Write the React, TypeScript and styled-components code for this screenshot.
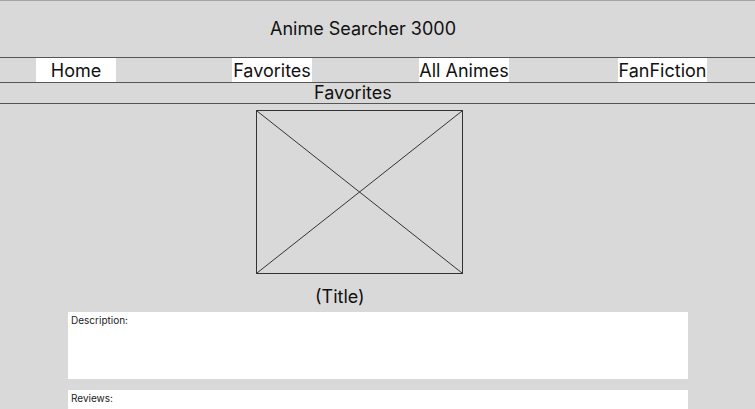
import React from "react";
import styled, { createGlobalStyle } from "styled-components";

const GlobalStyle = createGlobalStyle`
  html, body {
    margin: 0;
    padding: 0;
    background: #d9d9d9;
  }
  body {
    font-family: Inter, "Noto Sans", "Liberation Sans", sans-serif;
    color: #111;
  }
`;

const Page = styled.div`
  display: flex;
  flex-direction: column;
  height: 409px;
  background: #d9d9d9;
  border-top: 1px solid #a3a3a3;
  box-sizing: border-box;
  overflow: hidden;
  & > * {
    flex-shrink: 0;
  }
`;

const Header = styled.header`
  height: 56px;
  display: flex;
  align-items: center;
  padding-left: 270px;
`;

const SiteTitle = styled.h1`
  margin: 0;
  font-size: 18px;
  font-weight: 400;
  line-height: 22px;
`;

const Nav = styled.nav`
  display: flex;
  height: 24px;
  padding-left: 36px;
  border-top: 1px solid #555;
  border-bottom: 1px solid #555;
`;

const NavButton = styled.a<{ $width: number; $offset: number }>`
  display: flex;
  align-items: center;
  justify-content: center;
  width: ${(p) => p.$width}px;
  margin-left: ${(p) => p.$offset}px;
  height: 24px;
  padding-top: 1px;
  box-sizing: border-box;
  background: #ffffff;
  font-size: 18px;
  line-height: 22px;
  color: #111;
  text-decoration: none;
  white-space: nowrap;
`;

const SectionHeading = styled.h2`
  margin: 0;
  height: 20px;
  padding-left: 314px;
  font-size: 18px;
  font-weight: 400;
  line-height: 20px;
  border-bottom: 1px solid #555;
`;

const Main = styled.main`
  display: flex;
  flex-direction: column;
  align-items: flex-start;
  & > * {
    flex-shrink: 0;
  }
`;

const ImageFrame = styled.div`
  margin-top: 6px;
  margin-left: 256px;
  width: 207px;
  height: 164px;
  box-sizing: border-box;
  border: 1px solid #333;
  svg {
    display: block;
    width: 100%;
    height: 100%;
  }
`;

const ItemTitle = styled.h3`
  margin: 12px 0 0 315px;
  font-size: 18px;
  font-weight: 400;
  line-height: 22px;
`;

const InfoBox = styled.section<{ $top: number }>`
  margin-top: ${(p) => p.$top}px;
  margin-left: 68px;
  width: 620px;
  height: 67px;
  box-sizing: border-box;
  padding: 2px 3px;
  background: #ffffff;
  font-size: 10px;
  line-height: 12px;
  color: #222;
`;

const navItems = [
  { label: "Home", width: 80, offset: 0 },
  { label: "Favorites", width: 80, offset: 116 },
  { label: "All Animes", width: 90, offset: 107 },
  { label: "FanFiction", width: 89, offset: 109 },
];

export default function App() {
  return (
    <>
      <GlobalStyle />
      <Page>
        <Header>
          <SiteTitle>Anime Searcher 3000</SiteTitle>
        </Header>
        <Nav>
          {navItems.map((n) => (
            <NavButton key={n.label} $width={n.width} $offset={n.offset}>
              {n.label}
            </NavButton>
          ))}
        </Nav>
        <SectionHeading>Favorites</SectionHeading>
        <Main>
          <ImageFrame>
            <svg viewBox="0 0 100 100" preserveAspectRatio="none">
              <line x1="0" y1="0" x2="100" y2="100" stroke="#333" strokeWidth="1" vectorEffect="non-scaling-stroke" />
              <line x1="100" y1="0" x2="0" y2="100" stroke="#333" strokeWidth="1" vectorEffect="non-scaling-stroke" />
            </svg>
          </ImageFrame>
          <ItemTitle>(Title)</ItemTitle>
          <InfoBox $top={4}>Description:</InfoBox>
          <InfoBox $top={11}>Reviews:</InfoBox>
        </Main>
      </Page>
    </>
  );
}
